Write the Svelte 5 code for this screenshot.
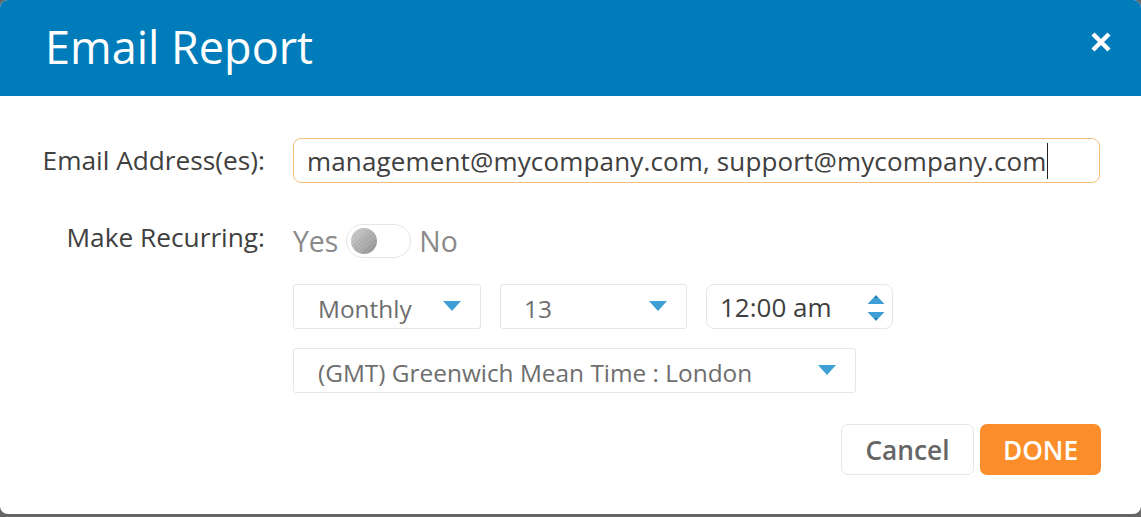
<script>
  let recurring = $state(false);
</script>

<div class="dialog">
  <header class="head">
    <h1>Email Report</h1>
    <button type="button" class="close" aria-label="Close">
      <svg width="22" height="22" viewBox="0 0 22 22"><path d="M3 3 19 19M19 3 3 19" stroke="#fff" stroke-width="4.4" /></svg>
    </button>
  </header>

  <div class="body">
    <div class="row first">
      <span class="label">Email Address(es):</span>
      <div class="field email"><span class="caret">management@mycompany.com, support@mycompany.com</span></div>
    </div>

    <div class="row second">
      <span class="label">Make Recurring:</span>
      <div class="toggle-wrap">
        <span class="opt">Yes</span>
        <button type="button" class="toggle" aria-label="Make recurring" onclick={() => (recurring = !recurring)}>
          <span class="knob" class:on={recurring}></span>
        </button>
        <span class="opt">No</span>
      </div>
    </div>

    <div class="selects">
      <div class="field select monthly"><span>Monthly</span><span class="arrow"></span></div>
      <div class="field select day"><span>13</span><span class="arrow"></span></div>
      <div class="field time">
        12:00 am
        <svg class="spin" width="18" height="30" viewBox="0 0 18 30">
          <path d="M9 2 17.5 11H.5Z" fill="#3d9fd3" />
          <path d="M.5 19H17.5L9 28Z" fill="#3d9fd3" />
          <path d="M7 5 9 3 11 5ZM7 25H11L9 27Z" fill="#1f6fa3" />
        </svg>
      </div>
    </div>

    <div class="field select zone"><span>(GMT) Greenwich Mean Time : London</span><span class="arrow"></span></div>

    <div class="actions">
      <button type="button" class="btn cancel">Cancel</button>
      <button type="button" class="btn done">DONE</button>
    </div>
  </div>
</div>

<style>
  :global(body) {
    margin: 0;
    background: #666;
  }

  .dialog {
    width: 1141px;
    height: 514px;
    background: #fff;
    border-radius: 8px;
    overflow: hidden;
    font-family: "Open Sans", sans-serif;
    color: #404040;
  }

  .head {
    height: 96px;
    background: #007cba;
    display: flex;
    align-items: center;
    justify-content: space-between;
    padding: 0 29.5px 0 45px;
    box-sizing: border-box;
  }

  h1 {
    margin: -3px 0 0;
    font-size: 45px;
    font-weight: 400;
    color: #fff;
    line-height: 96px;
  }

  .close {
    border: 0;
    background: none;
    padding: 0;
    width: 22px;
    height: 22px;
    margin-bottom: 12px;
  }

  .close svg {
    display: block;
  }

  .body {
    padding: 42px 40px 0 293px;
  }

  .row {
    display: flex;
    align-items: center;
  }

  .label {
    width: 265px;
    margin-left: -293px;
    margin-right: 28px;
    text-align: right;
    font-size: 26.25px;
    flex: none;
  }

  .first .label {
    margin-top: -1px;
  }

  .field {
    box-sizing: border-box;
    border: 1px solid #e6e6e6;
    border-radius: 5px;
    background: #fff;
    font-size: 26px;
    height: 45px;
    display: flex;
    align-items: center;
    white-space: nowrap;
    position: relative;
  }

  .email {
    width: 807px;
    padding-left: 13px;
    border-color: #f5bd7c;
    border-radius: 8px;
    letter-spacing: 0.15px;
  }

  .caret {
    border-right: 1px solid #222;
    height: 36px;
    line-height: 36px;
  }

  .second {
    margin-top: 41px;
    align-items: flex-start;
  }

  .second .label {
    line-height: 26px;
  }

  .toggle-wrap {
    display: flex;
    align-items: center;
    height: 34px;
  }

  .opt {
    font-size: 28.4px;
    color: #8a8a8a;
  }

  .toggle {
    width: 65px;
    height: 34px;
    margin: 0 8px;
    padding: 3px 4px;
    border: 1px solid #e6e6e6;
    border-radius: 17px;
    background: #fff;
    display: flex;
    box-sizing: border-box;
  }

  .knob {
    width: 26px;
    height: 26px;
    border-radius: 50%;
    background:
      repeating-linear-gradient(135deg, rgba(255, 255, 255, 0.12) 0 1px, transparent 1px 3px),
      linear-gradient(135deg, #cdcdcd, #8c8c8c);
  }

  .knob.on {
    margin-left: auto;
  }

  .selects {
    display: flex;
    gap: 19px;
    margin-top: 26px;
  }

  .select {
    color: #6e6e6e;
    border-radius: 3px;
    font-size: 24.4px;
  }

  .select > span:first-child {
    position: relative;
    top: 2px;
  }

  .arrow {
    position: absolute;
    right: 19px;
    top: 16px;
    width: 0;
    height: 0;
    border-left: 9.5px solid transparent;
    border-right: 9.5px solid transparent;
    border-top: 10px solid #3d9fd3;
  }

  .monthly {
    width: 188px;
    padding-left: 24px;
  }

  .day {
    width: 187px;
    padding-left: 23px;
  }

  .time {
    width: 187px;
    padding-left: 13px;
    border-radius: 8px;
    color: #404040;
  }

  .spin {
    position: absolute;
    right: 7px;
    top: 8px;
  }

  .zone {
    width: 563px;
    margin-top: 19px;
    padding-left: 24px;
  }

  .actions {
    display: flex;
    justify-content: flex-end;
    gap: 6px;
    margin-top: 31px;
  }

  .btn {
    height: 51px;
    border-radius: 7px;
    font-family: inherit;
    font-size: 26.25px;
    font-weight: 600;
    padding: 0;
  }

  .cancel {
    width: 133px;
    background: #fff;
    border: 1px solid #e6e6e6;
    color: #666;
  }

  .done {
    width: 121px;
    background: #fb8e2b;
    border: 0;
    color: #fff;
  }
</style>
